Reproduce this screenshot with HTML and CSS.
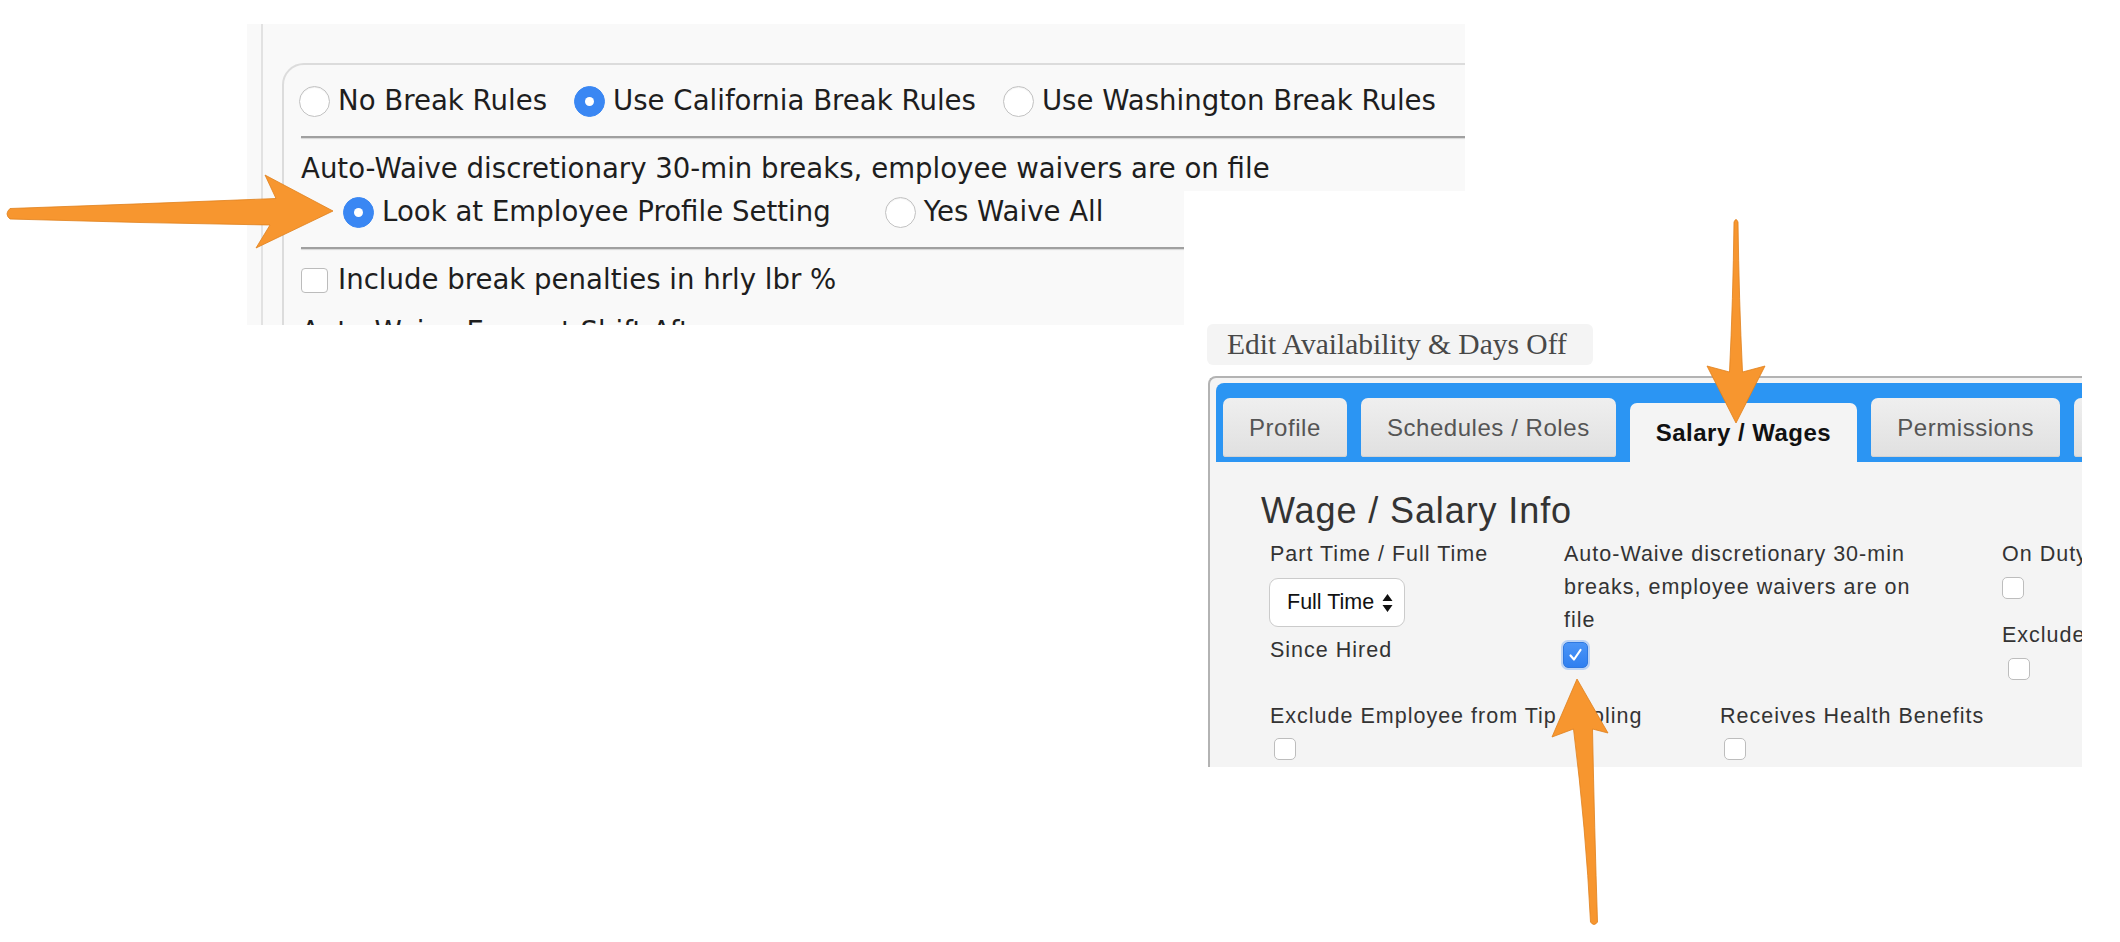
FILE: index.html
```html
<!DOCTYPE html>
<html lang="en">
<head>
<meta charset="utf-8">
<title>Break rules and wage settings</title>
<link rel="stylesheet" href="styles.css">
</head>
<body>
<div class="canvas">
  <section class="shot shot-breaks">
    <div class="shot-inner">
      <div class="fieldset">
        <div class="row row-rules">
          <label class="opt"><span class="radio"></span>No Break Rules</label>
          <label class="opt"><span class="radio on"></span>Use California Break Rules</label>
          <label class="opt"><span class="radio"></span>Use Washington Break Rules</label>
        </div>
        <div class="rule"></div>
        <p class="line">Auto-Waive discretionary 30-min breaks, employee waivers are on file</p>
        <div class="row row-waive">
          <label class="opt"><span class="radio on"></span>Look at Employee Profile Setting</label>
          <label class="opt"><span class="radio"></span>Yes Waive All</label>
        </div>
        <div class="rule"></div>
        <label class="opt check-row"><span class="box"></span>Include break penalties in hrly lbr %</label>
        <p class="line line-cut">Auto-Waive Exempt Shift After</p>
      </div>
    </div>
  </section>

  <section class="shot shot-profile">
    <div class="avail-btn">Edit Availability &amp; Days Off</div>
    <div class="panel">
      <div class="tabbar">
        <div class="tab">Profile</div>
        <div class="tab">Schedules / Roles</div>
        <div class="tab active">Salary / Wages</div>
        <div class="tab">Permissions</div>
        <div class="tab">Documents</div>
      </div>
      <div class="content">
        <h2 class="heading">Wage / Salary Info</h2>
        <div class="fields">
          <div class="col col-1">
            <div class="lbl">Part Time / Full Time</div>
            <div class="select">Full Time<span class="sel-arrows"><svg width="11" height="20" viewBox="0 0 11 20"><path d="M5.5 1 L10.5 8 L0.5 8 Z M0.5 12 L10.5 12 L5.5 19 Z" fill="#111"/></svg></span></div>
            <div class="lbl since">Since Hired</div>
          </div>
          <div class="col col-2">
            <div class="lbl">Auto-Waive discretionary 30-min breaks, employee waivers are on file</div>
            <span class="cbx checked"><svg width="25" height="26" viewBox="0 0 25 26"><path d="M7.5 13.5 L11 17.5 L17.5 8" fill="none" stroke="#fff" stroke-width="2.2" stroke-linecap="round" stroke-linejoin="round"/></svg></span>
          </div>
          <div class="col col-3">
            <div class="lbl">On Duty Meal Period</div>
            <span class="cbx"></span>
            <div class="lbl exclude">Exclude from Overtime</div>
            <span class="cbx shift"></span>
          </div>
        </div>
        <div class="fields fields-2">
          <div class="col col-a">
            <div class="lbl">Exclude Employee from Tip Pooling</div>
            <span class="cbx small-shift"></span>
          </div>
          <div class="col col-b">
            <div class="lbl">Receives Health Benefits</div>
            <span class="cbx small-shift"></span>
          </div>
        </div>
      </div>
    </div>
  </section>

  <svg class="arrows" width="2120" height="942" viewBox="0 0 2120 942">
    <g fill="#f7962f" stroke="#e0801c" stroke-width="0.8" stroke-linejoin="round">
      <path d="M10 208.5 Q140 204 276 198.5 L265 175 L333 211 L256 248 L270 225 Q140 223 10 219 Q4 214 10 208.5 Z"/>
      <path d="M1734 222 Q1733 300 1729.5 372 L1707 366 L1736 423 L1765 366 L1742.5 372 Q1739 300 1738 222 Q1736 217 1734 222 Z"/>
      <path d="M1577 679 L1608 733 L1592.5 729 Q1594.5 830 1597.5 922 Q1594 927 1590.5 922 Q1586 830 1573.5 729 L1552 737 Z"/>
    </g>
  </svg>
</div>
</body>
</html>
```
FILE: styles.css
```css
* { box-sizing: border-box; }

html, body {
  margin: 0;
  padding: 0;
  background: #ffffff;
}

.canvas {
  position: relative;
  width: 2120px;
  height: 942px;
  overflow: hidden;
  background: #ffffff;
}

.shot {
  position: absolute;
  overflow: hidden;
}

/* ---------- left screenshot: break rules ---------- */
.shot-breaks {
  left: 247px;
  top: 24px;
  width: 1218px;
  height: 301px;
  background: #f9f9f9;
  padding-left: 14px;
  font-family: "DejaVu Sans", Verdana, sans-serif;
  font-size: 27.6px;
  color: #1e1e1e;
}

.shot-inner {
  height: 100%;
  border-left: 2px solid #e2e2e2;
  padding: 39px 0 0 19px;
}

.fieldset {
  width: 1400px;
  height: 400px;
  border: 2px solid #dcdcdc;
  border-radius: 22px;
  padding: 19px 0 0 17px;
}

.row {
  display: flex;
  align-items: center;
  height: 34px;
  white-space: nowrap;
}

.row-rules {
  gap: 27px;
  margin-left: -2px;
}

.row-waive {
  margin-top: 9px;
  padding-left: 42px;
  gap: 54px;
}

.opt {
  display: inline-flex;
  align-items: center;
  gap: 8px;
  line-height: 34px;
  white-space: nowrap;
}

.radio {
  position: relative;
  width: 31px;
  height: 31px;
  border-radius: 50%;
  background: #ffffff;
  border: 1.5px solid #c2c2c2;
  box-shadow: inset 0 1px 1px rgba(0, 0, 0, 0.06);
  flex: 0 0 auto;
}

.radio.on {
  background: #3a87f3;
  border-color: #3a87f3;
  box-shadow: none;
}

.radio.on::after {
  content: "";
  position: absolute;
  left: 50%;
  top: 50%;
  width: 9px;
  height: 9px;
  margin: -4.5px 0 0 -4.5px;
  border-radius: 50%;
  background: #ffffff;
}

.rule {
  margin-top: 18px;
  height: 2px;
  background: #a0a0a0;
  box-shadow: 0 1px 1px #d6d6d6;
}

.line {
  margin: 14px 0 0;
  line-height: 34px;
  white-space: nowrap;
}

.check-row {
  margin-top: 14px;
  display: flex;
  gap: 10px;
}

.box {
  width: 27px;
  height: 25px;
  border: 1.5px solid #bcbcbc;
  border-radius: 4px;
  background: #ffffff;
  flex: 0 0 auto;
}

.line-cut {
  margin-top: 18px;
}

/* ---------- right screenshot: employee profile ---------- */
.shot-profile {
  left: 1184px;
  top: 191px;
  width: 936px;
  height: 751px;
  background: #ffffff;
  z-index: 1;
  font-family: "Liberation Sans", Arial, Helvetica, sans-serif;
}

.avail-btn {
  margin: 133px 0 0 23px;
  width: 386px;
  height: 41px;
  display: flex;
  align-items: center;
  padding-left: 20px;
  background: #f4f4f4;
  border-radius: 6px;
  font-family: "Liberation Serif", "Times New Roman", serif;
  font-size: 29.5px;
  color: #484848;
  white-space: nowrap;
}

.panel {
  margin: 11px 0 0 24px;
  width: 874px;
  height: 391px;
  border-top: 2px solid #b3b3b3;
  border-left: 2px solid #b3b3b3;
  border-top-left-radius: 8px;
  background: #f4f4f4;
  padding: 5px 0 0 6px;
  overflow: hidden;
}

.tabbar {
  height: 79px;
  background: #2b95f3;
  border-top-left-radius: 8px;
  display: flex;
  align-items: flex-end;
  gap: 14px;
  padding: 0 0 5px 7px;
}

.tab {
  flex: 0 0 auto;
  height: 59px;
  padding: 1px 26px 0;
  line-height: 58px;
  border-radius: 7px 7px 3px 3px;
  background: linear-gradient(#efefef, #e0e0e0);
  box-shadow: inset 0 -1px 0 #d2d2d2;
  font-size: 24px;
  letter-spacing: 0.55px;
  color: #555555;
  white-space: nowrap;
}

.tab.active {
  margin-bottom: -5px;
  padding-top: 0;
  line-height: 59px;
  border-radius: 7px 7px 0 0;
  background: #f4f4f4;
  box-shadow: none;
  color: #111111;
  font-weight: bold;
  letter-spacing: 0.5px;
}

.content {
  padding: 29px 0 0 45px;
}

.heading {
  margin: 0;
  font-size: 36px;
  line-height: 40px;
  font-weight: normal;
  letter-spacing: 0.9px;
  color: #333333;
  white-space: nowrap;
}

.fields {
  display: flex;
  margin-top: 7px;
  padding-left: 9px;
}

.col {
  display: flex;
  flex-direction: column;
  align-items: flex-start;
  flex: 0 0 auto;
}

.col-1 { width: 294px; }
.col-2 { width: 360px; margin-right: 78px; }
.col-3 { white-space: nowrap; }

.lbl {
  font-size: 21.5px;
  line-height: 33px;
  letter-spacing: 1px;
  color: #333333;
}

.select {
  margin: 7px 0 0 -1px;
  width: 136px;
  height: 49px;
  display: flex;
  align-items: center;
  justify-content: space-between;
  padding: 0 11px 0 17px;
  background: #ffffff;
  border: 1.5px solid #cbcbcb;
  border-radius: 9px;
  font-size: 21.5px;
  color: #111111;
  white-space: nowrap;
}

.sel-arrows {
  display: flex;
  align-items: center;
}

.since {
  margin-top: 7px;
}

.cbx {
  display: block;
  width: 22px;
  height: 22px;
  margin-top: 6px;
  background: #ffffff;
  border: 1.5px solid #bdbdbd;
  border-radius: 5px;
}

.cbx.checked {
  width: 25px;
  height: 26px;
  margin: 5px 0 0 -1px;
  border: 1px solid #2f78e0;
  background: linear-gradient(#4b95f7, #2f7ff0);
  box-shadow: 0 0 0 2px rgba(80, 150, 245, 0.35);
}

.cbx.checked svg {
  display: block;
  margin: -1px 0 0 -1px;
}

.exclude {
  margin-top: 20px;
}

.cbx.shift {
  margin-left: 6px;
}

.fields-2 {
  margin-top: 20px;
}

.col-a { width: 450px; }

.cbx.small-shift {
  margin: 5px 0 0 4px;
}

/* ---------- annotation arrows ---------- */
.arrows {
  position: absolute;
  left: 0;
  top: 0;
  z-index: 2;
  pointer-events: none;
}
```
